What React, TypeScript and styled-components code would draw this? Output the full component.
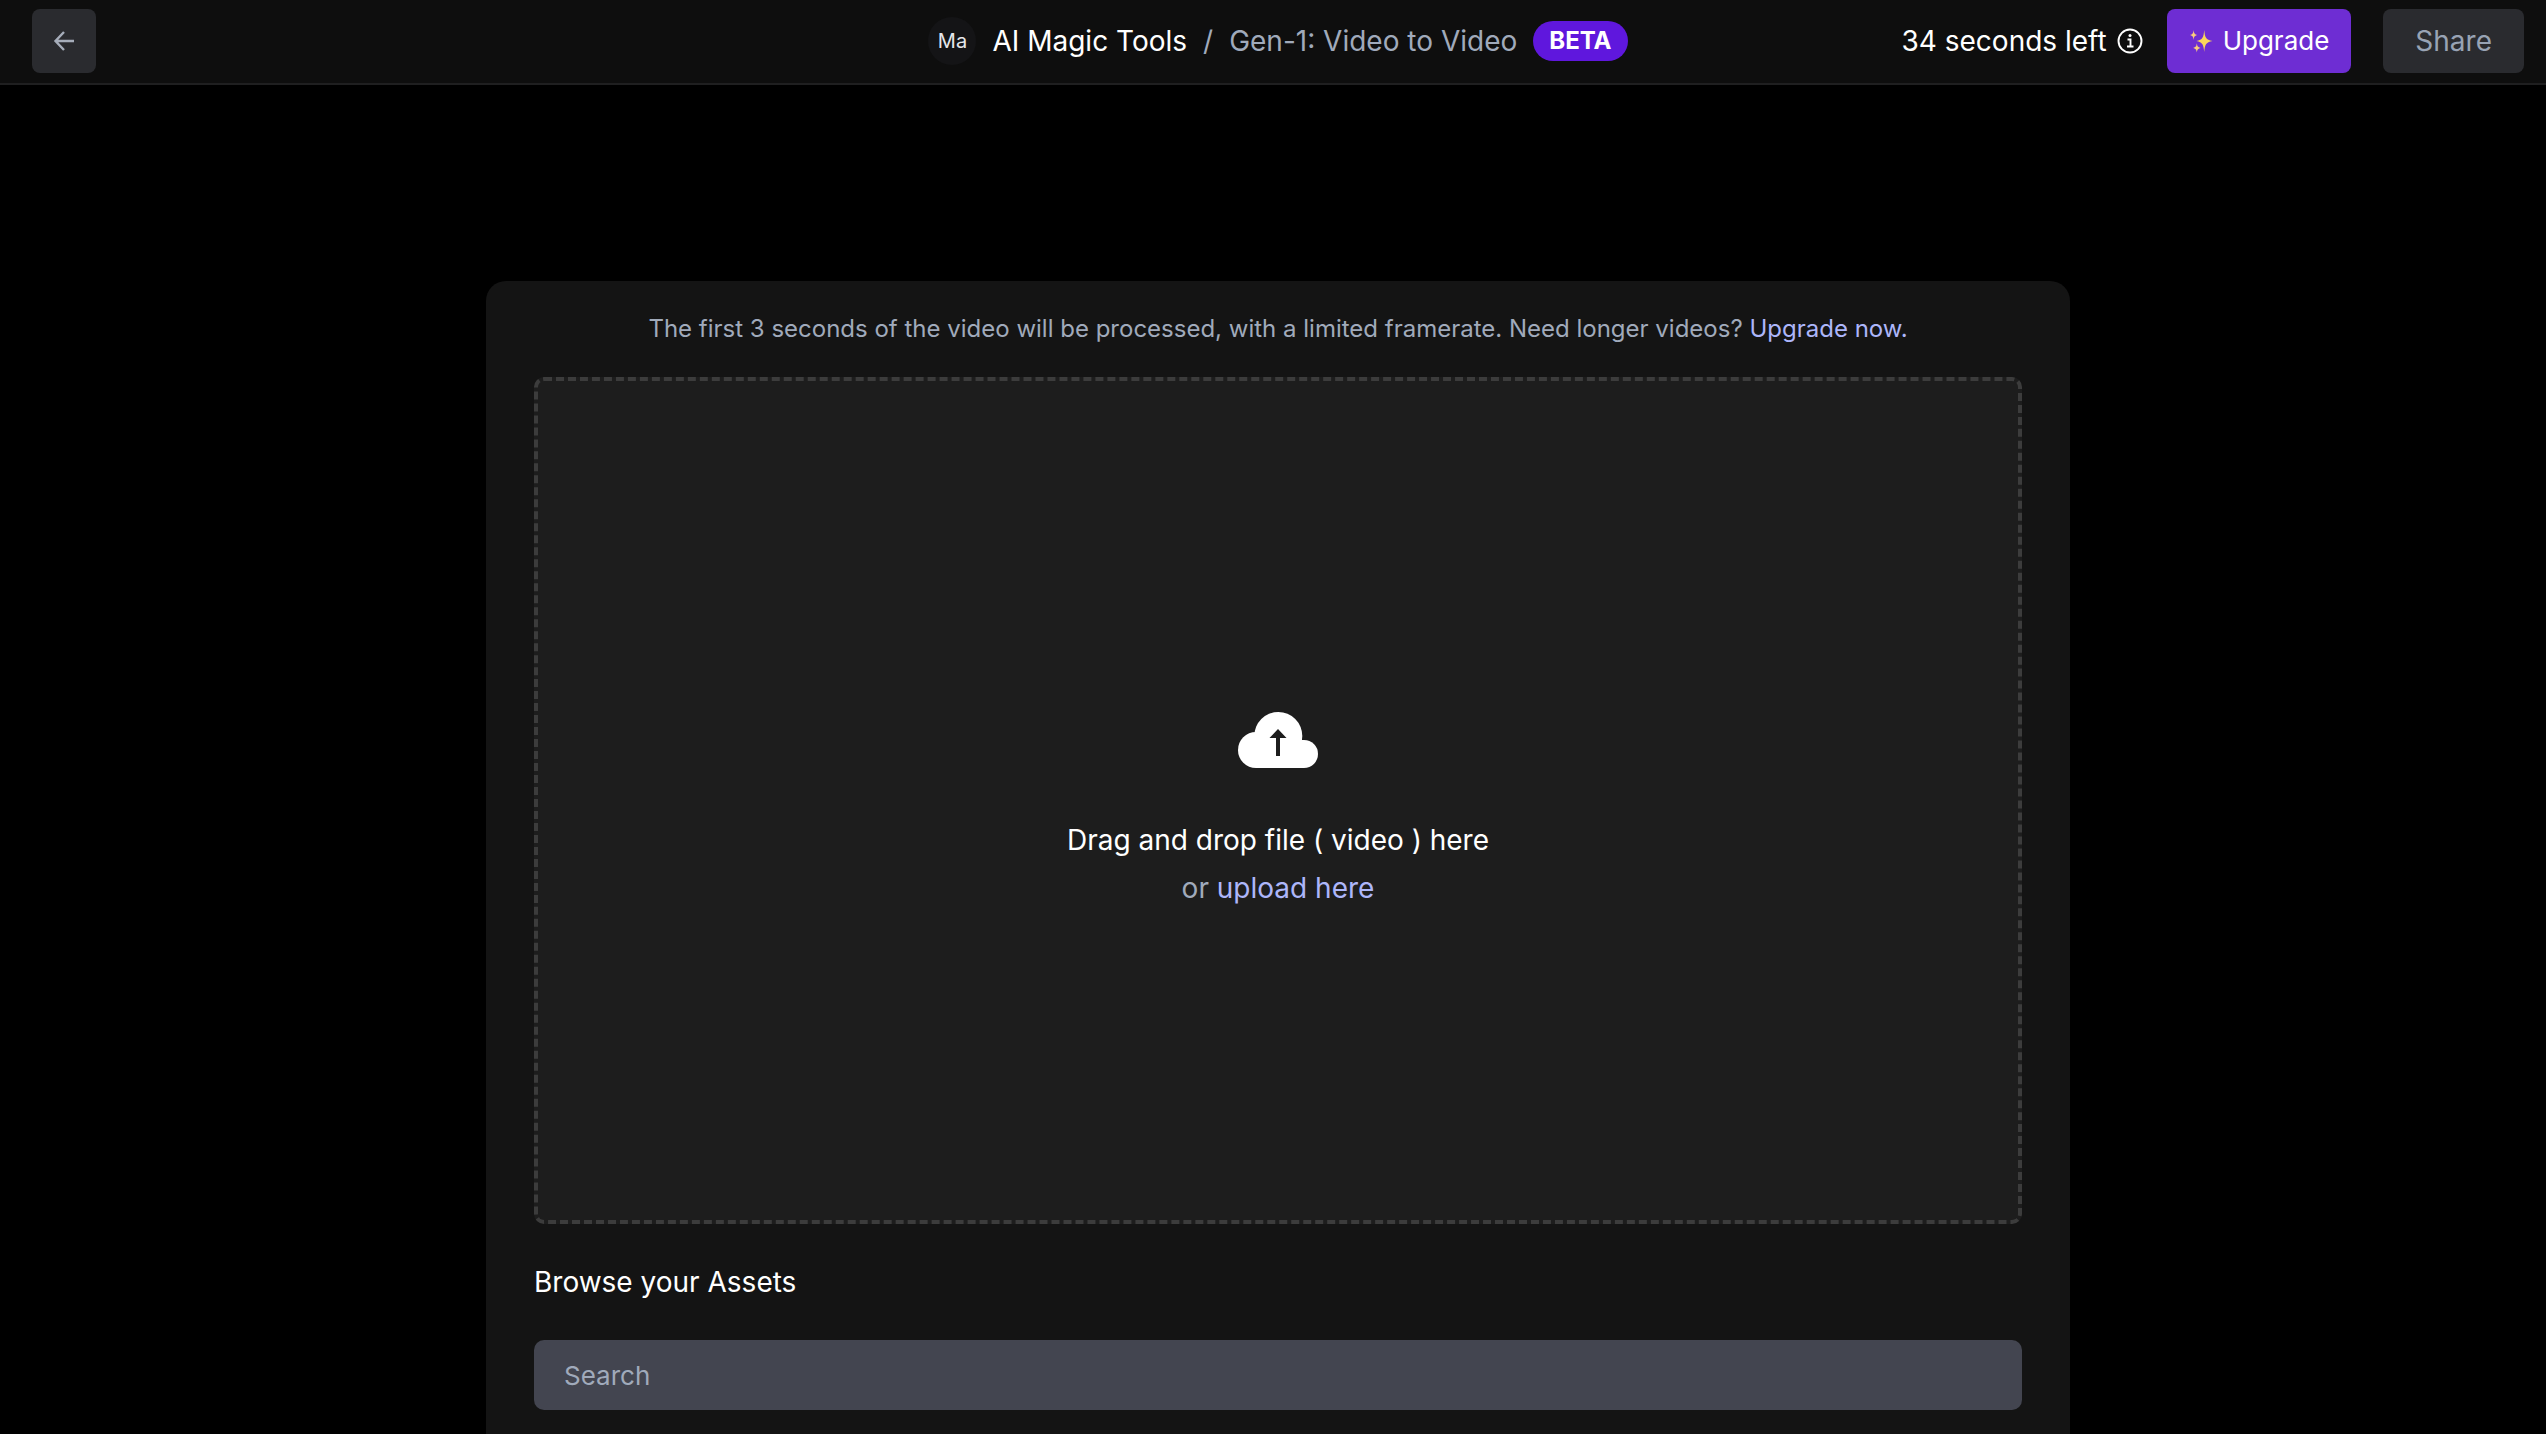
import React from "react";
import styled, { createGlobalStyle } from "styled-components";

const Global = createGlobalStyle`
  *, *::before, *::after { box-sizing: border-box; }
  body { margin: 0; background: #000; color: #fff; font-family: Inter, "Liberation Sans", sans-serif; font-size: 28px; line-height: 48px; }
  button, input { font: inherit; }
`;
const Header = styled.header`
  display: grid;
  grid-template-columns: 1fr auto 1fr;
  align-items: center;
  padding: 9px 22px 10px 32px;
  background: #0e0e0e;
  border-bottom: 2px solid #1f1f20;
`;
const Button = styled.button<{ $tone?: "primary" }>`
  display: inline-flex;
  align-items: center;
  justify-content: center;
  gap: 10px;
  height: 64px;
  padding: 0 ${(p) => (p.$tone ? 22 : 32)}px;
  border: 0;
  border-radius: 8px;
  background: ${(p) => (p.$tone ? "#6e2dd3" : "#2a2b2f")};
  color: ${(p) => (p.$tone ? "#fff" : "#98a3b4")};
  font-size: ${(p) => (p.$tone ? 26 : 28)}px;
  cursor: pointer;
`;
const BackButton = styled(Button)`
  width: 64px;
  padding: 0;
  justify-self: start;
`;
const Breadcrumbs = styled.nav`
  display: flex;
  align-items: center;
  gap: 16px;
`;
const Avatar = styled.span`
  display: grid;
  place-items: center;
  width: 48px;
  height: 48px;
  border-radius: 50%;
  background: #141416;
  color: #e5e7eb;
  font-size: 20px;
`;
const Crumb = styled.a`
  color: #fff;
  text-decoration: none;
`;
const Muted = styled.span`
  color: #a0aabb;
`;
const Badge = styled.span`
  padding: 0 16px;
  border-radius: 20px;
  background: #5f17dd;
  font-size: 24px;
  font-weight: 700;
  line-height: 40px;
`;
const Actions = styled.div`
  display: flex;
  align-items: center;
  justify-self: end;
  gap: 32px;
`;
const Account = styled.div`
  display: flex;
  align-items: center;
  gap: 24px;
`;
const Quota = styled.span`
  display: flex;
  align-items: center;
  gap: 10px;
`;
const Main = styled.main`
  display: flex;
  justify-content: center;
  padding: 196px 0 0 10px;
`;
const Card = styled.section`
  display: flex;
  flex-direction: column;
  width: 100%;
  max-width: 1584px;
  padding: 24px 48px;
  border-radius: 20px 20px 0 0;
  background: #141414;
`;
const Notice = styled.p`
  margin: 0 0 24px;
  color: #a0aabb;
  font-size: 24px;
  text-align: center;
`;
const Link = styled.a`
  color: #adb6fa;
  text-decoration: none;
`;
const DropZone = styled.div`
  display: flex;
  flex-direction: column;
  align-items: center;
  justify-content: center;
  min-height: 847px;
  padding-top: 22px;
  border: 4px dashed #3c3c3c;
  border-radius: 10px;
  background: #1d1d1d;
  text-align: center;
`;
const Prompt = styled.p`
  margin: 48px 0 0;
`;
const Label = styled.label`
  margin: 34px 0;
`;
const Search = styled.input`
  width: 100%;
  height: 70px;
  padding: 0 30px;
  border: 0;
  border-radius: 10px;
  background: #434550;
  color: #fff;
  font-size: 26px;
  outline: none;
  &::placeholder { color: #a0aabb; opacity: 1; }
`;

const ArrowLeft = () => (
  <svg width="24" height="24" viewBox="0 0 24 24" fill="none" stroke="#a6adba" strokeWidth="2.4" aria-hidden="true">
    <path d="M12 3 3.5 12l8.500 9M3.500 12H22" />
  </svg>
);
const Info = () => (
  <svg width="26" height="26" viewBox="0 0 26 26" fill="none" stroke="#fff" strokeWidth="1.9" aria-hidden="true">
    <circle cx="13" cy="13" r="11.500" />
    <path d="M10.500 11.500H13.500V18.500M10 18.500H16.500" />
    <circle cx="13" cy="7.500" r="1.500" fill="#fff" stroke="none" />
  </svg>
);
const Sparkles = () => (
  <svg width="24" height="24" viewBox="0 0 26 26" fill="#fbd65b" aria-hidden="true">
    <path d="M16.500 1C17.300 9 18 11.500 25.500 13C18 14.500 17.300 17 16.500 25C15.700 17 15 14.500 8 13C15 11.500 15.700 9 16.500 1Z" />
    <path d="M5 1C5.500 5 6 5.500 9 6.500C6 7.500 5.500 8 5 12C4.500 8 4 7.500 1 6.500C4 5.500 4.500 5 5 1Z" fill="#facd7c" />
    <path d="M8.500 15.500C9 19 9.500 19.500 12.500 20.500C9.500 21.500 9 22 8.500 25.500C8 22 7.500 21.500 4.500 20.500C7.500 19.500 8 19 8.500 15.500Z" fill="#facd7c" />
  </svg>
);
const Cloud = () => (
  <svg width="80" height="56" viewBox="0 0 80 56" aria-hidden="true">
    <g fill="#fff">
      <circle cx="18" cy="38" r="18" />
      <circle cx="40.300" cy="24" r="24" />
      <circle cx="66" cy="42" r="14" />
      <path d="M18 24H64V28H66V56H18Z" />
    </g>
    <path fill="#1d1d1d" d="M40 17 48.500 26H42V44H38V26H31.500Z" />
  </svg>
);

export default function App() {
  return (
    <>
      <Global />
      <Header>
        <BackButton aria-label="Back"><ArrowLeft /></BackButton>
        <Breadcrumbs aria-label="Breadcrumb">
          <Avatar>Ma</Avatar>
          <Crumb href="#tools">AI Magic Tools</Crumb>
          <Muted>/</Muted>
          <Muted>Gen-1: Video to Video</Muted>
          <Badge>BETA</Badge>
        </Breadcrumbs>
        <Actions>
          <Account>
            <Quota>34 seconds left <Info /></Quota>
            <Button $tone="primary"><Sparkles />Upgrade</Button>
          </Account>
          <Button>Share</Button>
        </Actions>
      </Header>
      <Main>
        <Card>
          <Notice>
            The first 3 seconds of the video will be processed, with a limited framerate. Need longer videos?{" "}
            <Link href="#upgrade">Upgrade now.</Link>
          </Notice>
          <DropZone>
            <Cloud />
            <Prompt>
              Drag and drop file ( video ) here<br />
              <Muted>or </Muted><Link href="#upload">upload here</Link>
            </Prompt>
          </DropZone>
          <Label htmlFor="asset-search">Browse your Assets</Label>
          <Search id="asset-search" type="search" placeholder="Search" />
        </Card>
      </Main>
    </>
  );
}
